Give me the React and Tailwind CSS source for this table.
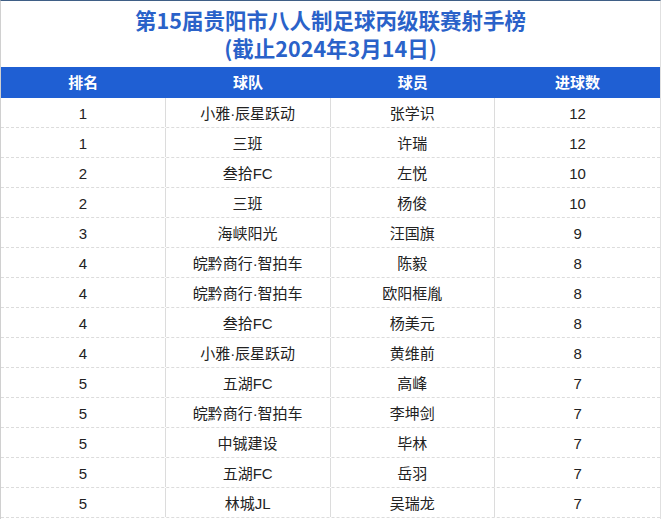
const rows = [
  ['1', '小雅·辰星跃动', '张学识', '12'],
  ['1', '三班', '许瑞', '12'],
  ['2', '叁拾FC', '左悦', '10'],
  ['2', '三班', '杨俊', '10'],
  ['3', '海峡阳光', '汪国旗', '9'],
  ['4', '皖黔商行·智拍车', '陈毅', '8'],
  ['4', '皖黔商行·智拍车', '欧阳框胤', '8'],
  ['4', '叁拾FC', '杨美元', '8'],
  ['4', '小雅·辰星跃动', '黄维前', '8'],
  ['5', '五湖FC', '高峰', '7'],
  ['5', '皖黔商行·智拍车', '李坤剑', '7'],
  ['5', '中铖建设', '毕林', '7'],
  ['5', '五湖FC', '岳羽', '7'],
  ['5', '林城JL', '吴瑞龙', '7'],
];

const headers = ['排名', '球队', '球员', '进球数'];

export default function App() {
  return (
    <div
      className="w-[661px] h-[519px] bg-white overflow-hidden border-t border-[#3f5f86] border-l border-l-[#d0d0d0] border-r border-r-[#e0e0e0]"
      style={{ fontFamily: '"Liberation Sans", "Noto Sans CJK SC", sans-serif' }}
    >
      {/* Title */}
      <div
        className="h-[66px] flex flex-col items-center justify-center text-[#2a62c9] font-bold text-[21.5px] leading-[28px]"
        style={{ fontFamily: '"Noto Sans CJK SC", sans-serif' }}
      >
        <div>第15届贵阳市八人制足球丙级联赛射手榜</div>
        <div>(截止2024年3月14日)</div>
      </div>

      {/* Header */}
      <div className="grid grid-cols-4 h-[31px] bg-[#1f5fd3] text-white font-bold text-[15px]">
        {headers.map((h) => (
          <div key={h} className="flex items-center justify-center pt-[1px]">
            {h}
          </div>
        ))}
      </div>

      {/* Body */}
      {rows.map((r, i) => (
        <div
          key={i}
          className="grid grid-cols-4 h-[30px] border-b border-dashed border-[#dcdcdc] text-[#222] text-[15px]"
        >
          {r.map((c, j) => (
            <div
              key={j}
              className={`flex items-center justify-center pt-[3px] ${j < 3 ? 'border-r border-[#dcdcdc]' : ''}`}
            >
              {c}
            </div>
          ))}
        </div>
      ))}
    </div>
  );
}
